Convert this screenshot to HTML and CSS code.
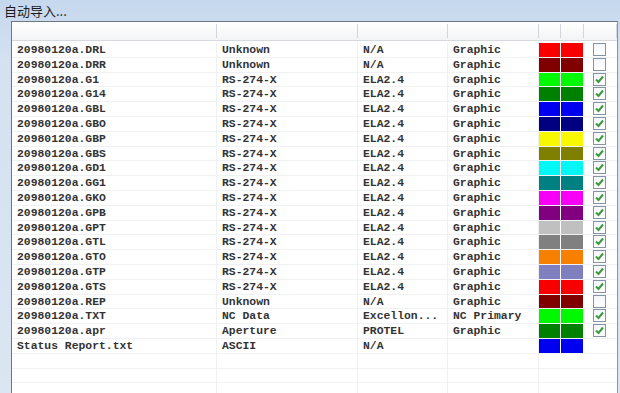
FILE: index.html
```html
<!DOCTYPE html>
<html lang="zh-CN">
<head>
    <meta charset="UTF-8">
    <title>自动导入</title>
    <link rel="stylesheet" href="styles.css">
</head>
<body>
    <div class="title">自动导入...</div>

    <div class="main">
        <div class="file-list">
            <div class="list-header">
                <div class="hcell"></div>
                <div class="hcell"></div>
                <div class="hcell"></div>
                <div class="hcell"></div>
                <div class="hcell"></div>
                <div class="hcell"></div>
                <div class="hcell"></div>
            </div>

            <div class="list-body">
                <div class="row"><span>20980120a.DRL</span><span>Unknown</span><span>N/A</span><span>Graphic</span><i class="sw red"></i><i class="sw red"></i><b class="chk"></b></div>
                <div class="row"><span>20980120a.DRR</span><span>Unknown</span><span>N/A</span><span>Graphic</span><i class="sw maroon"></i><i class="sw maroon"></i><b class="chk"></b></div>
                <div class="row"><span>20980120a.G1</span><span>RS-274-X</span><span>ELA2.4</span><span>Graphic</span><i class="sw lime"></i><i class="sw lime"></i><b class="chk on"></b></div>
                <div class="row"><span>20980120a.G14</span><span>RS-274-X</span><span>ELA2.4</span><span>Graphic</span><i class="sw green"></i><i class="sw green"></i><b class="chk on"></b></div>
                <div class="row"><span>20980120a.GBL</span><span>RS-274-X</span><span>ELA2.4</span><span>Graphic</span><i class="sw blue"></i><i class="sw blue"></i><b class="chk on"></b></div>
                <div class="row"><span>20980120a.GBO</span><span>RS-274-X</span><span>ELA2.4</span><span>Graphic</span><i class="sw navy"></i><i class="sw navy"></i><b class="chk on"></b></div>
                <div class="row"><span>20980120a.GBP</span><span>RS-274-X</span><span>ELA2.4</span><span>Graphic</span><i class="sw yellow"></i><i class="sw yellow"></i><b class="chk on"></b></div>
                <div class="row"><span>20980120a.GBS</span><span>RS-274-X</span><span>ELA2.4</span><span>Graphic</span><i class="sw olive"></i><i class="sw olive"></i><b class="chk on"></b></div>
                <div class="row"><span>20980120a.GD1</span><span>RS-274-X</span><span>ELA2.4</span><span>Graphic</span><i class="sw cyan"></i><i class="sw cyan"></i><b class="chk on"></b></div>
                <div class="row"><span>20980120a.GG1</span><span>RS-274-X</span><span>ELA2.4</span><span>Graphic</span><i class="sw teal"></i><i class="sw teal"></i><b class="chk on"></b></div>
                <div class="row"><span>20980120a.GKO</span><span>RS-274-X</span><span>ELA2.4</span><span>Graphic</span><i class="sw magenta"></i><i class="sw magenta"></i><b class="chk on"></b></div>
                <div class="row"><span>20980120a.GPB</span><span>RS-274-X</span><span>ELA2.4</span><span>Graphic</span><i class="sw purple"></i><i class="sw purple"></i><b class="chk on"></b></div>
                <div class="row"><span>20980120a.GPT</span><span>RS-274-X</span><span>ELA2.4</span><span>Graphic</span><i class="sw silver"></i><i class="sw silver"></i><b class="chk on"></b></div>
                <div class="row"><span>20980120a.GTL</span><span>RS-274-X</span><span>ELA2.4</span><span>Graphic</span><i class="sw gray"></i><i class="sw gray"></i><b class="chk on"></b></div>
                <div class="row"><span>20980120a.GTO</span><span>RS-274-X</span><span>ELA2.4</span><span>Graphic</span><i class="sw orange"></i><i class="sw orange"></i><b class="chk on"></b></div>
                <div class="row"><span>20980120a.GTP</span><span>RS-274-X</span><span>ELA2.4</span><span>Graphic</span><i class="sw lavender"></i><i class="sw lavender"></i><b class="chk on"></b></div>
                <div class="row"><span>20980120a.GTS</span><span>RS-274-X</span><span>ELA2.4</span><span>Graphic</span><i class="sw red"></i><i class="sw red"></i><b class="chk on"></b></div>
                <div class="row"><span>20980120a.REP</span><span>Unknown</span><span>N/A</span><span>Graphic</span><i class="sw maroon"></i><i class="sw maroon"></i><b class="chk"></b></div>
                <div class="row"><span>20980120a.TXT</span><span>NC Data</span><span>Excellon...</span><span>NC Primary</span><i class="sw lime"></i><i class="sw lime"></i><b class="chk on"></b></div>
                <div class="row"><span>20980120a.apr</span><span>Aperture</span><span>PROTEL</span><span>Graphic</span><i class="sw green"></i><i class="sw green"></i><b class="chk on"></b></div>
                <div class="row"><span>Status Report.txt</span><span>ASCII</span><span>N/A</span><span></span><i class="sw blue"></i><i class="sw blue"></i><b class="none"></b></div>
                <div class="row"><span></span><span></span><span></span><span></span><i></i><i></i><b class="none"></b></div>
                <div class="row"><span></span><span></span><span></span><span></span><i></i><i></i><b class="none"></b></div>
                <div class="row"><span></span><span></span><span></span><span></span><i></i><i></i><b class="none"></b></div>
            </div>
        </div>
    </div>

    <script>
        // draw the tick inside every checked box
        document.querySelectorAll('.chk.on').forEach(function (box) {
            box.innerHTML = '<svg width="11" height="11" viewBox="0 0 11 11"><polyline points="2,5.5 4.5,8 9,2.5" fill="none" stroke="#3c9a3c" stroke-width="2"/></svg>';
        });
    </script>
</body>
</html>
```

FILE: styles.css
```css
body {
    margin: 0;
    padding: 0;
    background: linear-gradient(#c6d8ee, #d3e1f1 60px, #dbe6f2);
    font-family: "Liberation Mono", "DejaVu Sans Mono", monospace;
    height: 393px;
    overflow: hidden;
}

.title {
    height: 21px;
    line-height: 21px;
    padding-left: 4px;
    font-family: "Noto Sans CJK SC", sans-serif;
    font-size: 13px;
    color: #1b1b1b;
}

.main {
    display: flex;
    padding-left: 11px;
    padding-right: 2px;
}

.file-list {
    flex: 1;
    height: 380px;
    background-color: white;
    border: 1px solid #8d959e;
    border-top-color: #6f7780;
    border-left-color: #6f7780;
}

.list-header,
.row {
    display: grid;
    grid-template-columns: 205px 141px 90px 91px 22px 23px 33px;
}

.list-header {
    height: 18px;
    background: linear-gradient(#ffffff, #f3f4f6);
    border-bottom: 1px solid #d6d9dd;
}

.hcell {
    border-right: 1px solid #d2d5d9;
    margin: 2px 0;
}

.list-body {
    padding-top: 2px;
}

.row {
    height: 14.8px;
    font-size: 11.4px;
    font-weight: bold;
    line-height: 15.4px;
    color: #333;
    border-bottom: 1px solid #f0f1f2;
    box-sizing: border-box;
}

.row span {
    padding-left: 5px;
    white-space: nowrap;
    overflow: hidden;
    border-right: 1px solid #eef0f2;
}

.row i {
    display: block;
    border-right: 1px solid white;
}

.row b {
    display: block;
}

/* layer colours */
.red { background-color: #f80000; }
.maroon { background-color: #800000; }
.lime { background-color: #00f800; }
.green { background-color: #008000; }
.blue { background-color: #0000f0; }
.navy { background-color: #000080; }
.yellow { background-color: #f8f800; }
.olive { background-color: #808000; }
.cyan { background-color: #00f8f8; }
.teal { background-color: #008080; }
.magenta { background-color: #f800f8; }
.purple { background-color: #800080; }
.silver { background-color: #c0c0c0; }
.gray { background-color: #808080; }
.orange { background-color: #f88000; }
.lavender { background-color: #8080c0; }

.chk {
    width: 11px;
    height: 11px;
    margin: 0 0 0 9px;
    border: 1px solid #8494a4;
    background: linear-gradient(#f4f6f8, #ffffff);
}

.chk svg {
    display: block;
}
```
